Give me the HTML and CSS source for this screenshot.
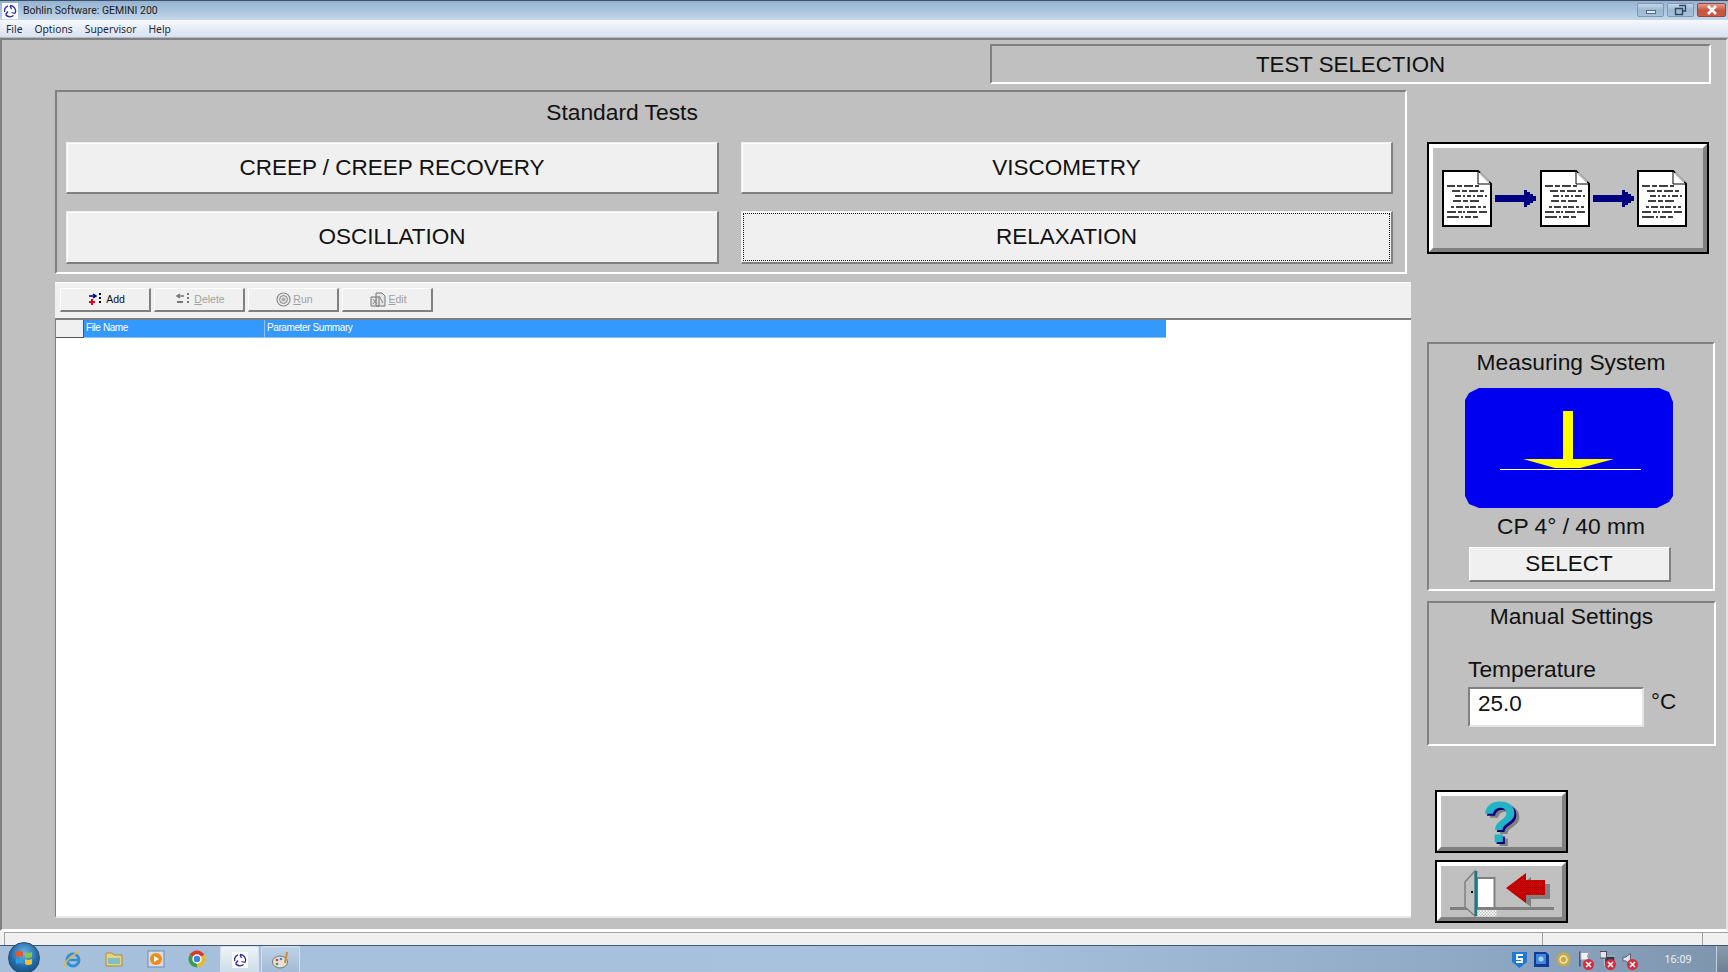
FILE: index.html
```html
<!DOCTYPE html>
<html lang="en">
<head>
    <meta charset="UTF-8">
    <meta name="viewport" content="width=device-width, initial-scale=1.0">
    <title>Bohlin Software: GEMINI 200</title>
    <link rel="stylesheet" href="styles.css">
</head>
<body>
    <svg class="defs" width="0" height="0">
        <defs>
            <pattern id="dither-red" width="2" height="2" patternUnits="userSpaceOnUse">
                <rect width="2" height="2" fill="#e00000"/>
                <rect width="1" height="1" fill="#a80000"/>
                <rect x="1" y="1" width="1" height="1" fill="#a80000"/>
            </pattern>
            <pattern id="dither-grey" width="3" height="3" patternUnits="userSpaceOnUse">
                <rect width="3" height="3" fill="#fff"/>
                <rect width="1.500" height="1.500" fill="#c0c0c0"/>
                <rect x="1.500" y="1.500" width="1.500" height="1.500" fill="#c0c0c0"/>
            </pattern>
        </defs>
        <symbol id="logo" viewBox="0 0 16 16">
            <rect width="16" height="16" fill="#fff"/>
            <path d="M8 2.500A5.500 5.500 0 0 1 13 10.500M11.500 12.500A5.500 5.500 0 0 1 3.500 11.500M2.700 9A5.500 5.500 0 0 1 6 2.800M8 2.500L9.500 6M13 10.500L9.500 9.500M3.500 11.500L6 8.500" fill="none" stroke="#2a2aa8" stroke-width="1.300"/>
        </symbol>
        <symbol id="doc" viewBox="0 0 50 57">
            <path d="M1 1H36L49 14V56H1Z" fill="#fff" stroke="#000" stroke-width="2"/>
            <path d="M36 1V14H49Z" fill="#fff" stroke="#000" stroke-width="1"/>
            <path d="M38 3L47 12" stroke="#bbb" stroke-width="2"/>
            <g stroke="#000" stroke-width="1.600" stroke-dasharray="8 2 5 2 9 2 4 3">
                <path d="M5 16H40"/>
                <path d="M10 21H44"/>
                <path d="M13 26H45" stroke-dasharray="6 2 2 2 4 2 2 2"/>
                <path d="M11 31H38"/>
                <path d="M9 37H44" stroke-dasharray="3 2 7 2 4 1 6 2"/>
                <path d="M5 42H45" stroke-dasharray="9 2 4 1 2 2 10 2"/>
                <path d="M5 47H36" stroke-dasharray="12 2 2 2 6 2"/>
            </g>
        </symbol>
        <symbol id="arrow" viewBox="0 0 41 17">
            <path d="M0 5H29V0H32V2H35V4H38V6H41V11H38V13H35V15H32V17H29V12H0Z" fill="#000080"/>
        </symbol>
        <symbol id="x-mark" viewBox="0 0 11 11">
            <circle cx="5.500" cy="5.500" r="5.500" fill="#d62c3c"/>
            <path d="M3 3L8 8M8 3L3 8" stroke="#fff" stroke-width="1.600"/>
        </symbol>
    </svg>

    <div class="window">
        <div class="title-bar">
            <svg class="title-logo" width="16" height="16"><use href="#logo"/></svg>
            <span class="title-text">Bohlin Software: GEMINI 200</span>
            <div class="win-controls">
                <div class="win-btn"><span class="min-glyph"></span></div>
                <div class="win-btn">
                    <svg width="13" height="12" viewBox="0 0 13 12"><path d="M5 1.500H11.500V7H9M1.500 4.500H8.500V10.500H1.500Z" fill="none" stroke="#2f4560" stroke-width="1.400"/></svg>
                </div>
                <div class="win-btn close">
                    <svg width="12" height="10" viewBox="0 0 12 10"><path d="M2 1L10 9M10 1L2 9" stroke="#fff" stroke-width="2.600"/></svg>
                </div>
            </div>
        </div>
        <div class="menu-bar">
            <span>File</span>
            <span>Options</span>
            <span>Supervisor</span>
            <span>Help</span>
        </div>

        <div class="client">
            <div class="screen-title">TEST SELECTION</div>
            <div class="columns">
                <div class="left-col">
                    <div class="tests-panel sunken">
                        <div class="tests-title">Standard Tests</div>
                        <div class="tests-grid">
                            <button class="test-btn">CREEP / CREEP RECOVERY</button>
                            <button class="test-btn">VISCOMETRY</button>
                            <button class="test-btn">OSCILLATION</button>
                            <button class="test-btn focused"><span>RELAXATION</span></button>
                        </div>
                    </div>

                    <div class="toolbar">
                        <button class="tool-btn">
                            <svg width="16" height="14" viewBox="0 0 16 14"><path d="M1 4H7M5 2L8 4L5 6" fill="none" stroke="#000080" stroke-width="1.500"/><path d="M4 7V13M1 10H7" stroke="#e00020" stroke-width="2"/><path d="M12 1V13" stroke="#000" stroke-width="2" stroke-dasharray="2 2"/></svg>
                            <span>Add</span>
                        </button>
                        <button class="tool-btn off">
                            <svg width="16" height="14" viewBox="0 0 16 14"><path d="M8 4H2M4 2L1 4L4 6" fill="none" stroke="#777" stroke-width="1.500"/><path d="M1 10H7" stroke="#777" stroke-width="2"/><path d="M12 1V13" stroke="#777" stroke-width="2" stroke-dasharray="2 2"/></svg>
                            <span><u>D</u>elete</span>
                        </button>
                        <button class="tool-btn off">
                            <svg width="15" height="15" viewBox="0 0 15 15"><circle cx="7.500" cy="7.500" r="6.500" fill="none" stroke="#888" stroke-width="1.200"/><circle cx="7.500" cy="7.500" r="4" fill="#ddd" stroke="#888"/><circle cx="7.500" cy="7.500" r="1.800" fill="#aaa"/></svg>
                            <span><u>R</u>un</span>
                        </button>
                        <button class="tool-btn off">
                            <svg width="16" height="15" viewBox="0 0 16 15"><path d="M6 1H12L15 4V14H6ZM1 5H9V14H1Z" fill="#e4e4e4" stroke="#777"/><path d="M3 7L7 12M7 7L3 12M9 4L13 11" stroke="#888"/></svg>
                            <span><u>E</u>dit</span>
                        </button>
                    </div>

                    <div class="grid-area">
                        <div class="grid-header">
                            <div class="corner-cell"></div>
                            <div class="head-cell file-col">File Name</div>
                            <div class="head-cell param-col">Parameter Summary</div>
                        </div>
                    </div>
                </div>

                <div class="right-col">
                    <button class="bitmap-btn sequence-btn">
                        <svg width="50" height="57"><use href="#doc"/></svg>
                        <svg width="41" height="17"><use href="#arrow"/></svg>
                        <svg width="50" height="57"><use href="#doc"/></svg>
                        <svg width="41" height="17"><use href="#arrow"/></svg>
                        <svg width="50" height="57"><use href="#doc"/></svg>
                    </button>

                    <div class="measure-panel sunken">
                        <div class="panel-title">Measuring System</div>
                        <svg class="geometry" width="208" height="120" viewBox="0 0 208 120">
                            <path d="M14 0H194L204 4L208 14V108L204 114L192 120H14L4 116L0 108V12L4 5Z" fill="#0000f0"/>
                            <rect x="98" y="23" width="10" height="49" fill="#ffff00"/>
                            <path d="M58 71H149L115 80H90Z" fill="#ffff00"/>
                            <rect x="35" y="81" width="141" height="1" fill="#fff"/>
                        </svg>
                        <div class="geometry-name">CP 4° / 40 mm</div>
                        <button class="select-btn">SELECT</button>
                    </div>

                    <div class="manual-panel sunken">
                        <div class="panel-title">Manual Settings</div>
                        <div class="temp-label">Temperature</div>
                        <div class="temp-row">
                            <div class="temp-input">25.0</div>
                            <span class="temp-unit">°C</span>
                        </div>
                    </div>

                    <button class="bitmap-btn small-btn help-btn"><span class="help-mark">?</span></button>
                    <button class="bitmap-btn small-btn exit-btn">
                        <svg width="104" height="50" viewBox="0 0 104 50">
                            <path d="M0 41.500H104" stroke="#808080" stroke-width="3"/>
                            <path d="M27 11H44.500V41H27Z" fill="#fff" stroke="#808080" stroke-width="2"/>
                            <path d="M15 15L25 4V49L15 40Z" fill="#c0c0c0" stroke="#808080" stroke-width="1.500"/>
                            <path d="M26 4V49" stroke="#0e7f86" stroke-width="2.500"/>
                            <rect x="21" y="24" width="2" height="2" fill="#000"/>
                            <rect x="27.500" y="43" width="19" height="6.500" fill="url(#dither-grey)"/>
                            <path d="M61 25L81 10V17H100V32H81V40Z" fill="#808080"/>
                            <path d="M56 21L76 6V13H95V28H76V36Z" fill="url(#dither-red)"/>
                        </svg>
                    </button>
                </div>
            </div>
        </div>

        <div class="status-bar">
            <div class="status-cell main"></div>
            <div class="status-cell mid"></div>
            <div class="status-cell end"></div>
        </div>

        <div class="taskbar">
            <div class="start-orb">
                <svg width="18" height="18" viewBox="0 0 18 18">
                    <path d="M1 3Q5 1 8 3V8Q5 6 1 8Z" fill="#e8552a"/>
                    <path d="M10 3Q13 5 17 3V8Q13 10 10 8Z" fill="#8cc63f"/>
                    <path d="M1 10Q5 8 8 10V15Q5 13 1 15Z" fill="#2f9be0"/>
                    <path d="M10 10Q13 12 17 10V15Q13 17 10 15Z" fill="#fbc02d"/>
                </svg>
            </div>
            <div class="quick-icons">
                <div class="task-slot">
                    <svg width="20" height="20" viewBox="0 0 20 20"><circle cx="10" cy="11" r="6" fill="none" stroke="#2f8fd8" stroke-width="3"/><path d="M4 11H16" stroke="#2f8fd8" stroke-width="2.500"/><path d="M2 18Q0 12 17 2" fill="none" stroke="#e8b93a" stroke-width="1.500"/></svg>
                </div>
                <div class="task-slot">
                    <svg width="20" height="18" viewBox="0 0 20 18"><path d="M2 3H8L10 5H18V16H2Z" fill="#e9d27a" stroke="#a58f3f"/><path d="M4 8H16V14H4Z" fill="#7ec0c8"/></svg>
                </div>
                <div class="task-slot">
                    <svg width="18" height="18" viewBox="0 0 18 18"><rect x="1" y="1" width="16" height="16" fill="#d6dce4" stroke="#6c8bb0"/><circle cx="9" cy="9" r="6" fill="#ee8c1c"/><path d="M7 6L12 9L7 12Z" fill="#fff"/></svg>
                </div>
                <div class="task-slot">
                    <svg width="18" height="18" viewBox="0 0 18 18"><path d="M9 9L1.640 4.750A8.500 8.500 0 0 1 16.360 4.750Z" fill="#d8392c"/><path d="M9 9L16.360 4.750A8.500 8.500 0 0 1 9 17.500Z" fill="#e8b92c"/><path d="M9 9L9 17.500A8.500 8.500 0 0 1 1.640 4.750Z" fill="#3a9a50"/><circle cx="9" cy="9" r="4" fill="#3f83d8" stroke="#fff" stroke-width="1.400"/></svg>
                </div>
                <div class="task-btn active">
                    <svg width="16" height="16"><use href="#logo"/></svg>
                </div>
                <div class="task-btn">
                    <svg width="20" height="18" viewBox="0 0 20 18"><ellipse cx="9" cy="11" rx="7.500" ry="6" fill="#e6e2d8" stroke="#7b7768"/><circle cx="6" cy="9" r="1.300" fill="#d8392c"/><circle cx="10" cy="8" r="1.300" fill="#2f8fd8"/><circle cx="6" cy="13" r="1.300" fill="#3aa050"/><path d="M16 1L14 12" stroke="#d88a2c" stroke-width="2"/></svg>
                </div>
            </div>
            <div class="tray">
                <svg width="15" height="17" viewBox="0 0 15 17"><path d="M0 1H15V11L7.500 17L0 11Z" fill="#1f78d1"/><path d="M11 4H5V8H10V11H4" fill="none" stroke="#fff" stroke-width="1.800"/></svg>
                <svg width="15" height="15" viewBox="0 0 15 15"><path d="M0 0H12L15 3V15H0Z" fill="#103c98"/><rect x="2" y="2" width="10" height="10" fill="#3f8ad8"/><circle cx="7" cy="7" r="2.500" fill="#a8d4f4"/></svg>
                <svg width="15" height="15" viewBox="0 0 15 15"><circle cx="7.500" cy="7.500" r="7" fill="#c8a948"/><circle cx="7.500" cy="7.500" r="3.500" fill="none" stroke="#f0e6bc" stroke-width="1.500"/></svg>
                <div class="tray-x">
                    <svg width="15" height="18" viewBox="0 0 16 18"><path d="M2 1V17" stroke="#445" stroke-width="1.500"/><path d="M3 2H12L10 6L12 10H3Z" fill="#eef2f6" stroke="#99a"/></svg>
                    <svg class="x-badge" width="11" height="11"><use href="#x-mark"/></svg>
                </div>
                <div class="tray-x">
                    <svg width="15" height="18" viewBox="0 0 16 18"><rect x="5" y="6" width="11" height="10" fill="#2c3a48" stroke="#ccd"/><rect x="0" y="1" width="7" height="7" fill="#dfe5ea" stroke="#445"/></svg>
                    <svg class="x-badge" width="11" height="11"><use href="#x-mark"/></svg>
                </div>
                <div class="tray-x">
                    <svg width="15" height="18" viewBox="0 0 16 18"><path d="M1 7H4L9 3V15L4 11H1Z" fill="#dfe5ea" stroke="#556"/></svg>
                    <svg class="x-badge" width="11" height="11"><use href="#x-mark"/></svg>
                </div>
                <div class="clock">16:09</div>
                <div class="show-desktop"></div>
            </div>
        </div>
    </div>
</body>
</html>
```

FILE: styles.css
```css
* {
    margin: 0;
    padding: 0;
    box-sizing: border-box;
}

body {
    width: 1728px;
    height: 972px;
    overflow: hidden;
    font-family: "Liberation Sans", Arial, sans-serif;
    color: #111;
    background: #c0c0c0;
}

button {
    font-family: inherit;
    color: inherit;
}

.defs {
    position: absolute;
}

.window {
    display: flex;
    flex-direction: column;
    height: 972px;
}

/* window chrome */
.title-bar {
    height: 20px;
    flex: none;
    display: flex;
    align-items: center;
    padding-left: 2px;
    border-top: 1px solid #3d5068;
    background: linear-gradient(180deg, #94b2d0 0%, #a9c3dd 45%, #c6d8ea 100%);
}

.title-text {
    margin-left: 5px;
    font-family: Roboto, sans-serif;
    font-size: 10.500px;
    color: #1c1c1c;
}

.win-controls {
    margin-left: auto;
    margin-right: 2px;
    display: flex;
    gap: 3px;
    align-self: flex-start;
    margin-top: 2px;
}

.win-btn {
    width: 27px;
    height: 14px;
    display: flex;
    align-items: center;
    justify-content: center;
    border: 1px solid #7f97b0;
    border-radius: 2px;
    background: linear-gradient(180deg, #c4d6e8 0%, #9db8d2 50%, #a9c2da 100%);
}

.win-btn.close {
    width: 29px;
    background: linear-gradient(180deg, #e2a08c 0%, #c9523c 55%, #c75c46 100%);
    border-color: #8f4a3c;
}

.min-glyph {
    width: 10px;
    height: 4px;
    margin-top: 3px;
    background: #e6edf4;
    border: 1px solid #516a84;
}

.menu-bar {
    height: 18px;
    flex: none;
    display: flex;
    align-items: center;
    gap: 12px;
    padding-left: 6px;
    font-family: "Noto Sans", sans-serif;
    font-size: 10.300px;
    color: #1e2a38;
    background: linear-gradient(180deg, #f6f8fc 0%, #d9e1f1 100%);
    border-bottom: 1px solid #b4bac4;
}

/* main client area */
.client {
    flex: 1;
    padding-top: 4px;
    border-top: 2px solid #808080;
    border-left: 2px solid #808080;
    border-right: 2px solid #e4e4e4;
    border-bottom: 2px solid #fff;
    background: #c0c0c0;
}

.sunken {
    border-top: 2px solid #808080;
    border-left: 2px solid #808080;
    border-right: 2px solid #fff;
    border-bottom: 2px solid #fff;
}

.screen-title {
    width: 721px;
    height: 40px;
    margin-left: 988px;
    padding-top: 2px;
    display: flex;
    align-items: center;
    justify-content: center;
    font-size: 22.300px;
    border-top: 2px solid #808080;
    border-left: 2px solid #808080;
    border-right: 2px solid #fff;
    border-bottom: 2px solid #fff;
}

.columns {
    display: flex;
    margin-top: 6px;
    margin-left: 53px;
}

.left-col {
    width: 1356px;
    display: flex;
    flex-direction: column;
}

.tests-panel {
    width: 1352px;
    height: 184px;
    padding: 8px 0 0 9px;
}

.tests-title {
    width: 1112px;
    text-align: center;
    font-size: 22.800px;
    line-height: 25px;
}

.tests-grid {
    display: grid;
    grid-template-columns: 653px 652px;
    grid-template-rows: 52px 53px;
    column-gap: 22px;
    row-gap: 17px;
    margin-top: 17px;
}

.test-btn {
    font-size: 22.500px;
    border: 1px solid #f0f0f0;
    border-right: 2px solid #808080;
    border-bottom: 2px solid #808080;
    background: #f0f0f0;
    box-shadow: inset 1px 1px 0 #fff;
}

.test-btn.focused {
    padding: 1px;
    display: flex;
}

.test-btn.focused span {
    flex: 1;
    display: flex;
    align-items: center;
    justify-content: center;
    border: 1px dotted #111;
}

.toolbar {
    height: 38px;
    margin-top: 8px;
    display: flex;
    align-items: center;
    gap: 3px;
    padding: 0 0 2px 5px;
    background: #f0f0f0;
    border-top: 1px solid #fff;
    border-bottom: 2px solid #808080;
}

.tool-btn {
    width: 91px;
    height: 24px;
    padding-left: 3px;
    display: flex;
    align-items: center;
    justify-content: center;
    gap: 2px;
    font-size: 10.500px;
    background: #f0f0f0;
    border: 1px solid #fff;
    border-right: 2px solid #808080;
    border-bottom: 2px solid #808080;
}

.tool-btn.off {
    color: #a0a0a0;
}

.grid-area {
    height: 598px;
    background: #fff;
    border-left: 1px solid #808080;
    border-bottom: 2px solid #e8e8e8;
}

.grid-header {
    display: flex;
    height: 18px;
    width: 1110px;
    background: #3399ff;
}

.corner-cell {
    width: 28px;
    background: #f0f0f0;
    border-right: 1px solid #555;
    border-bottom: 1px solid #555;
}

.head-cell {
    font-size: 10px;
    letter-spacing: -0.4px;
    line-height: 16px;
    color: #fff;
    padding-left: 2px;
    border-right: 1px solid #8cc4ff;
    border-bottom: 1px solid #8cc4ff;
}

.file-col {
    width: 181px;
}

.param-col {
    flex: 1;
    border-right: none;
}

/* right column */
.right-col {
    width: 290px;
    margin-left: 16px;
    padding-top: 52px;
    display: flex;
    flex-direction: column;
    align-items: flex-start;
}

.bitmap-btn {
    display: flex;
    align-items: center;
    justify-content: center;
    background: #c0c0c0;
    outline: 2px solid #000;
    outline-offset: -2px;
    border: 6px solid;
    border-color: #fff #808080 #808080 #fff;
}

.sequence-btn {
    width: 282px;
    height: 112px;
    gap: 3.250px;
    padding-right: 7px;
}

.measure-panel {
    width: 288px;
    height: 249px;
    margin-top: 88px;
    display: flex;
    flex-direction: column;
    align-items: center;
}

.panel-title {
    font-size: 22.800px;
    line-height: 25px;
    margin-top: 6px;
}

.geometry {
    margin: 13px 4px 0 0;
}

.geometry-name {
    font-size: 22.800px;
    line-height: 25px;
    margin-top: 6px;
}

.select-btn {
    width: 202px;
    height: 35px;
    margin: 8px 3px 0 0;
    font-size: 22.500px;
    background: #f0f0f0;
    border: 1px solid #fff;
    border-right: 2px solid #808080;
    border-bottom: 2px solid #808080;
}

.manual-panel {
    width: 289px;
    height: 145px;
    margin-top: 10px;
    display: flex;
    flex-direction: column;
}

.manual-panel .panel-title {
    text-align: center;
    margin-top: 1px;
}

.temp-label {
    font-size: 22.800px;
    line-height: 25px;
    margin: 28px 0 0 39px;
}

.temp-row {
    display: flex;
    align-items: flex-start;
    margin: 5px 0 0 39px;
}

.temp-input {
    width: 176px;
    height: 40px;
    padding: 1px 0 0 8px;
    font-size: 22.500px;
    line-height: 27px;
    background: #fff;
    border-top: 2px solid #808080;
    border-left: 2px solid #808080;
    border-right: 2px solid #e4e4e4;
    border-bottom: 2px solid #e4e4e4;
}

.temp-unit {
    margin: 1px 0 0 7px;
    font-size: 22.500px;
    line-height: 27px;
}

.small-btn {
    width: 133px;
    height: 63px;
    margin-left: 8px;
}

.help-btn {
    margin-top: 44px;
}

.exit-btn {
    margin-top: 7px;
}

.help-mark {
    margin-right: 3px;
    font-size: 58px;
    line-height: 50px;
    font-weight: 700;
    color: #22b4c4;
    text-shadow: 2px 2px 0 #000080, 5px 4px 0 #808080;
}

/* status strip and taskbar */
.status-bar {
    height: 14px;
    flex: none;
    display: flex;
    padding-left: 4px;
    background: #f0f0f0;
    border-top: 1px solid #fff;
}

.status-cell {
    border-top: 1px solid #a0a0a0;
    border-left: 1px solid #a0a0a0;
}

.status-cell.main {
    width: 1538px;
}

.status-cell.mid {
    width: 160px;
}

.status-cell.end {
    flex: 1;
}

.taskbar {
    height: 27px;
    flex: none;
    display: flex;
    align-items: center;
    position: relative;
    border-top: 1px solid #3f5878;
    background: linear-gradient(90deg, #a6c0dc 0%, #a8c2de 55%, #8fa8c4 85%, #7e95ae 100%);
}

.start-orb {
    position: absolute;
    left: 8px;
    top: -4px;
    width: 32px;
    height: 32px;
    display: flex;
    align-items: center;
    justify-content: center;
    border-radius: 50%;
    border: 1px solid #2d4a68;
    background: radial-gradient(circle at 50% 35%, #6fb5e4 0%, #1f6aa6 55%, #123e68 100%);
}

.quick-icons {
    height: 100%;
    display: flex;
    align-items: center;
    margin-left: 52px;
}

.task-slot {
    width: 41.500px;
    display: flex;
    justify-content: center;
}

.task-btn {
    width: 39px;
    height: 100%;
    display: flex;
    align-items: center;
    justify-content: center;
    margin-left: 2px;
    border: 1px solid #d4e0ec;
    border-bottom: none;
    border-radius: 2px 2px 0 0;
    background: linear-gradient(180deg, #bed2e6 0%, #a3bbd5 100%);
}

.task-btn.active {
    background: linear-gradient(180deg, #eef3f8 0%, #cddcea 100%);
}

.tray {
    height: 100%;
    margin-left: auto;
    display: flex;
    align-items: center;
    gap: 7px;
}

.tray-x {
    position: relative;
    width: 15px;
    height: 18px;
}

.x-badge {
    position: absolute;
    right: -1px;
    bottom: -2px;
}

.clock {
    width: 52px;
    margin-left: 8px;
    text-align: center;
    font-family: "Noto Sans", sans-serif;
    font-size: 10.500px;
    color: #eef3f8;
}

.show-desktop {
    width: 12px;
    height: 100%;
    margin-left: 5px;
    border-left: 1px solid #c4d0dc;
    background: linear-gradient(180deg, #8a9bac 0%, #6d8095 100%);
}
```
